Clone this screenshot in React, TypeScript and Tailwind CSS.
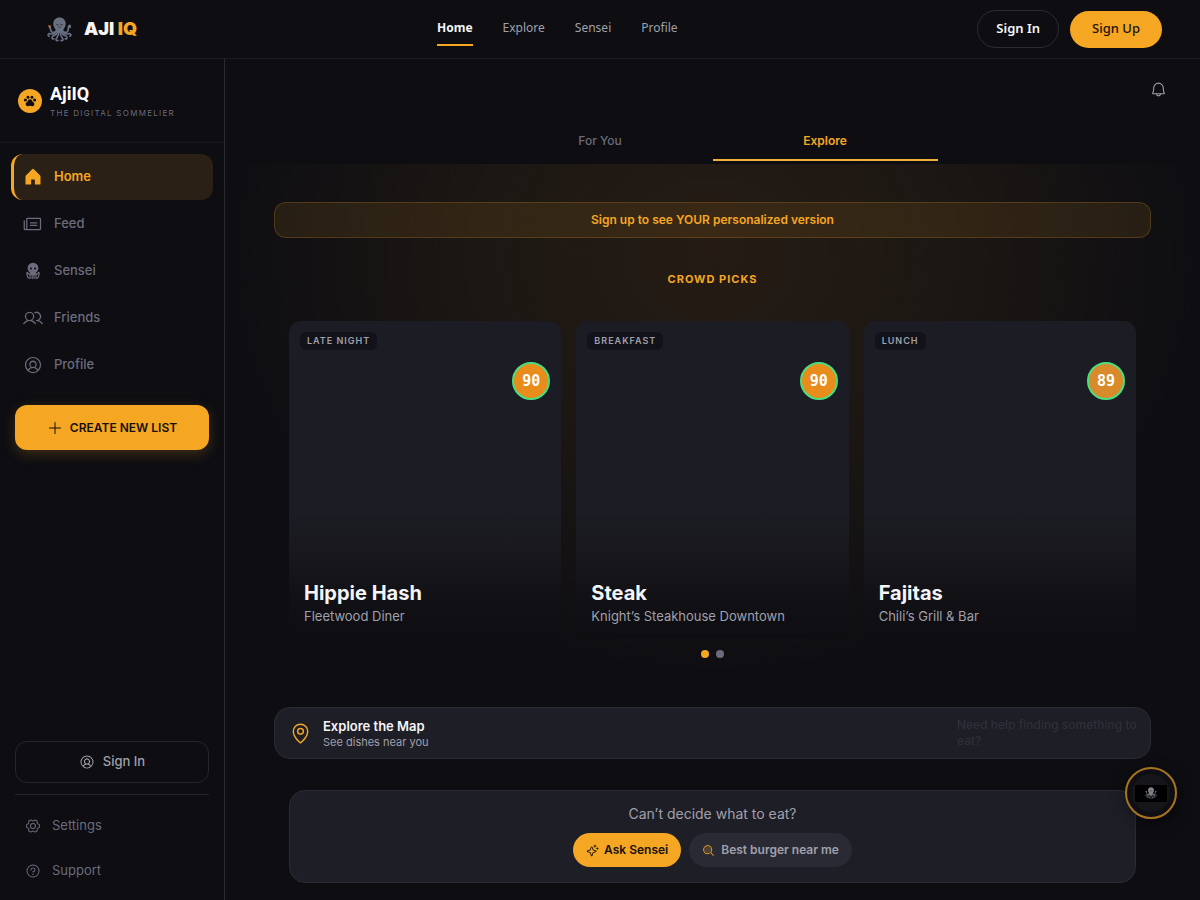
import type { ReactNode } from "react";
import {
  PiBell,
  PiGearSix,
  PiHouseFill,
  PiMagnifyingGlassDuotone,
  PiMapPin,
  PiNewspaper,
  PiPawPrintFill,
  PiPlus,
  PiQuestion,
  PiSparkle,
  PiUserCircle,
  PiUsers,
} from "react-icons/pi";

function OctopusLogo({ className }: { className: string }) {
  return (
    <svg viewBox="0 0 48 48" className={className} aria-hidden="true">
      <path
        fill="currentColor"
        d="M24 1c-7 0-12 5-12 12 0 5 2.500 7.500 4.500 11.500L20 31h8l3.500-6.500C33.500 20.500 36 18 36 13c0-7-5-12-12-12Z"
      />
      <g fill="none" stroke="currentColor" strokeWidth="3.200" strokeLinecap="round">
        <path d="M18 26c-2 4-8 5-10 1-1.500-3-1-5-3-8" />
        <path d="M18 28c-3 5-9 5-12 4-4-1-5 4-2 5" />
        <path d="M20 29c-1 6-7 6-9 8-3 3-1 6 2 5" />
        <path d="M22 30c1 6-2 8-4 11s0 5 3 4" />
        <path d="M30 26c2 4 8 5 10 1 1.500-3 0-7 2-10 2-2 4 0 2 3" />
        <path d="M30 28c3 5 9 5 12 4 4-1 5 4 2 5" />
        <path d="M28 29c1 6 7 6 9 8 3 3 1 6-2 5" />
        <path d="M26 30c-1 6 2 8 4 11s0 5-3 4" />
      </g>
      <path d="M2 16l6 1-3 5Z" fill="#d9782f" />
      <g fill="none" stroke="#23252e" strokeWidth="1.400" strokeLinecap="round">
        <path d="M18 14c1 2 3 2 4 0M26 14c1 2 3 2 4 0M22 19c1 1 3 1 4 0" />
      </g>
    </svg>
  );
}

function SenseiIcon() {
  return (
    <svg viewBox="0 0 24 24" className="size-5" aria-hidden="true">
      <circle cx="12" cy="8.500" r="6.500" fill="currentColor" />
      <path fill="currentColor" d="M8.500 13h7v4h-7z" />
      <g fill="none" stroke="currentColor" strokeWidth="1.500" strokeLinecap="round">
        <path d="M8.500 15.500c-2 .5-3 0-3-2M15.500 15.500c2 .5 3 0 3-2M8.500 17v3.500c0 .5-1.500.5-1.500 0M11 16v5M13.200 16v5M15.500 17v3.500c0 .5 1.500.5 1.500 0M4.700 14c0 3.500.3 5.500 1.800 6M19.300 14c0 3.500-.3 5.500-1.800 6" />
      </g>
      <circle cx="9.500" cy="9" r="1.300" fill="#0d0d12" />
      <circle cx="14.500" cy="9" r="1.300" fill="#0d0d12" />
    </svg>
  );
}

const topLinks = ["Explore", "Sensei", "Profile"];

const sideLinks: { label: string; icon: ReactNode }[] = [
  { label: "Feed", icon: <PiNewspaper className="size-5" /> },
  { label: "Sensei", icon: <SenseiIcon /> },
  { label: "Friends", icon: <PiUsers className="size-5" /> },
  { label: "Profile", icon: <PiUserCircle className="size-5" /> },
];

const picks = [
  { meal: "LATE NIGHT", score: 90, dish: "Hippie Hash", place: "Fleetwood Diner", tone: "bg-[#e88c1c]" },
  { meal: "BREAKFAST", score: 90, dish: "Steak", place: "Knight’s Steakhouse Downtown", tone: "bg-[#e88c1c]" },
  { meal: "LUNCH", score: 89, dish: "Fajitas", place: "Chili’s Grill & Bar", tone: "bg-[#d98a2b]" },
];

function Header() {
  return (
    <header className="flex h-[59px] items-center justify-between border-b border-[#1d1d22] bg-[#0d0d12] pr-[38px] pl-[47px] font-['Noto_Sans',sans-serif]">
      <a href="#" className="flex items-center gap-3">
        <OctopusLogo className="size-[25px] text-[#687082]" />
        <span className="font-[Inter,sans-serif] text-lg font-black text-[#f5f5f7]">
          AJI <span className="text-[#f5a623]">IQ</span>
        </span>
      </a>
      <nav className="flex items-center gap-[30px] text-xs leading-5 text-[#a0a0ab]">
        <a href="#" className="border-b-2 border-[#f5a623] pt-1.5 pb-1.5 font-bold text-[#f5f5f7]">
          Home
        </a>
        {topLinks.map((l) => (
          <a key={l} href="#" className="border-b-2 border-transparent pt-1.5 pb-1.5">
            {l}
          </a>
        ))}
      </nav>
      <div className="flex items-center gap-[11px] text-[13px] font-semibold">
        <button className="h-[38px] rounded-full border border-[#2b2b32] px-[18px] text-[#f5f5f7]">Sign In</button>
        <button className="h-[37px] rounded-full bg-[#f5a623] px-[22px] font-medium text-[#1a1408]">Sign Up</button>
      </div>
    </header>
  );
}

function Sidebar() {
  return (
    <aside className="flex w-[225px] shrink-0 flex-col border-r border-[#2a2a31] bg-[#0d0d12]">
      <div className="flex h-[84px] items-center gap-2 border-b border-[#17171c] pl-[18px]">
        <span className="flex size-6 items-center justify-center rounded-full bg-[#f5a623] text-[#0d0d12]">
          <PiPawPrintFill className="size-[14px]" />
        </span>
        <div>
          <p className="font-[Roboto,sans-serif] text-lg leading-6 font-bold text-white">AjiIQ</p>
          <p className="text-[8px] leading-[14px] tracking-[0.16em] text-[#6b6b7b]">THE DIGITAL SOMMELIER</p>
        </div>
      </div>
      <nav className="flex flex-col gap-px px-[11px] pt-[11px] text-[13px] text-[#6b6b7b]">
        <a
          href="#"
          className="flex h-[46px] items-center gap-[11px] rounded-xl border-l-[3px] border-[#f5a623] bg-[#2a2015] pl-[9px] font-semibold text-[#f5a623]"
        >
          <PiHouseFill className="size-5" />
          Home
        </a>
        {sideLinks.map((l) => (
          <a key={l.label} href="#" className="flex h-[46px] items-center gap-[11px] pl-3 font-medium">
            {l.icon}
            {l.label}
          </a>
        ))}
      </nav>
      <div className="px-[15px] pt-[17px]">
        <button className="flex h-[45px] w-full items-center justify-center gap-[7px] rounded-xl bg-[#f5a623] text-xs font-semibold text-[#14100a] shadow-[0_4px_14px_rgba(245,166,35,0.22)]">
          <PiPlus className="size-4" />
          CREATE NEW LIST
        </button>
      </div>
      <div className="mt-auto px-[15px] pb-[7px] text-[13px] text-[#6b6b7b]">
        <button className="flex h-[42px] w-full items-center justify-center gap-2 rounded-xl border border-[#26262c] font-medium text-[#a0a0ab]">
          <PiUserCircle className="size-4" />
          Sign In
        </button>
        <div className="mt-[11px] flex flex-col border-t border-[#26262c] pt-2">
          <a href="#" className="flex h-[45px] items-center gap-[11px] pl-2.5">
            <PiGearSix className="size-4" />
            Settings
          </a>
          <a href="#" className="flex h-[45px] items-center gap-[11px] pl-2.5">
            <PiQuestion className="size-4" />
            Support
          </a>
        </div>
      </div>
    </aside>
  );
}

export default function App() {
  return (
    <div className="flex min-h-screen flex-col bg-[#0d0d12] font-[Inter,sans-serif]">
      <Header />
      <div className="flex grow">
        <Sidebar />
        <main className="min-w-0 grow">
          <div className="bg-[#0e0e12]">
            <div className="flex h-[60px] items-center justify-end pr-[33px]">
              <button aria-label="Notifications" className="text-[#a0a0ab]">
                <PiBell className="size-[17px]" />
              </button>
            </div>
            <div role="tablist" className="mx-auto flex max-w-[450px] pb-[3px] text-xs">
              <button role="tab" aria-selected="false" className="h-[42px] flex-1 border-b-2 border-transparent pt-1 font-medium text-[#6b6b7b]">
                For You
              </button>
              <button role="tab" aria-selected="true" className="h-[42px] flex-1 border-b-2 border-[#f0b03a] pt-1 font-semibold text-[#f5a623]">
                Explore
              </button>
            </div>
          </div>

          <div className="bg-[radial-gradient(ellipse_510px_440px_at_50%_90px,rgba(245,150,35,0.1),rgba(245,166,35,0.065)_45%,rgba(245,166,35,0.02)_82%,transparent)] px-[49px] pt-[38px] pb-4">
            <a
              href="#"
              className="flex h-9 items-center justify-center rounded-xl border border-[#f5a623]/20 bg-[#f5a623]/10 text-xs font-semibold text-[#f5a623]"
            >
              Sign up to see YOUR personalized version
            </a>

            <section className="px-[15px]">
              <h2 className="pt-[33px] text-center text-[11px] leading-4 font-bold tracking-[1px] text-[#f5a623]">CROWD PICKS</h2>
              <div className="mt-[34px] grid grid-cols-3 gap-[15px]">
                {picks.map((p) => (
                  <article
                    key={p.dish}
                    className="flex h-[318px] flex-col rounded-xl bg-[linear-gradient(to_bottom,#1c1c24_0%,#1c1c24_60%,#18181e_72%,#111116_86%,#0d0d12_100%)] px-[11px] pt-[11px] pb-[14px]"
                  >
                    <span className="self-start rounded-md bg-[#12121a] px-[7px] text-[9px] leading-[18px] font-semibold tracking-[1px] text-[#a0a0ab]">
                      {p.meal}
                    </span>
                    <span
                      className={`mt-3 flex size-[38px] items-center justify-center self-end rounded-full border-2 border-[#4ade80] font-['DejaVu_Sans_Mono',monospace] text-[15px] font-bold text-white ${p.tone}`}
                    >
                      {p.score}
                    </span>
                    <div className="mt-auto pl-1">
                      <h3 className="text-xl leading-7 font-bold text-[#f5f5f7]">{p.dish}</h3>
                      <p className="text-[13px] leading-[18px] text-[#a0a0ab]">{p.place}</p>
                    </div>
                  </article>
                ))}
              </div>
              <div className="mt-[11px] flex justify-center gap-[7px]">
                <button aria-label="Page 1" className="size-2 rounded-full bg-[#f5a623]" />
                <button aria-label="Page 2" className="size-2 rounded-full bg-[#6b6b7b]" />
              </div>
            </section>

            <a
              href="#"
              className="mt-[49px] flex h-[52px] items-center gap-[11px] rounded-2xl border border-[#2b2b33] bg-[#1e1e27] px-[14px]"
            >
              <PiMapPin className="size-[23px] text-[#f5a623]" />
              <span>
                <span className="block text-[13px] leading-[18px] font-semibold text-[#f5f5f7]">Explore the Map</span>
                <span className="block text-[11px] leading-[14px] text-[#a0a0ab]">See dishes near you</span>
              </span>
            </a>

            <section className="mx-[15px] mt-[31px] flex flex-col items-center rounded-2xl border border-[#2b2b33] bg-[#1e1e27] pt-[13px] pb-[15px]">
              <p className="text-sm text-[#a0a0ab]">Can’t decide what to eat?</p>
              <div className="mt-[9px] flex gap-2 text-xs font-semibold">
                <button className="flex h-[34px] items-center gap-[5px] rounded-full bg-[#f5a623] px-[13px] text-[#14100a]">
                  <PiSparkle className="size-[13px]" />
                  Ask Sensei
                </button>
                <button className="flex h-[34px] items-center gap-1.5 rounded-full bg-[#2a2a35] px-[13px] font-semibold text-[#a0a0ab]">
                  <PiMagnifyingGlassDuotone className="size-[13px] text-[#f5a623]" />
                  Best burger near me
                </button>
              </div>
            </section>
          </div>
        </main>
      </div>

      <div className="fixed right-[23px] bottom-[81px] flex flex-col items-end gap-[18px]">
        <p className="mr-6 w-[196px] text-xs leading-4 font-medium text-[#30303a]">Need help finding something to eat?</p>
        <button
          aria-label="Ask Sensei for help"
          className="flex size-[52px] items-center justify-center rounded-full border-2 border-[#a8741f] bg-[#0e0e13] shadow-[0_4px_16px_rgba(0,0,0,0.4)]"
        >
          <span className="flex size-[38px] items-center justify-center rounded-full bg-[#15151a]">
            <span className="flex h-[17px] w-8 shrink-0 items-center justify-center bg-black">
              <OctopusLogo className="size-3 text-[#858592]" />
            </span>
          </span>
        </button>
      </div>
    </div>
  );
}
